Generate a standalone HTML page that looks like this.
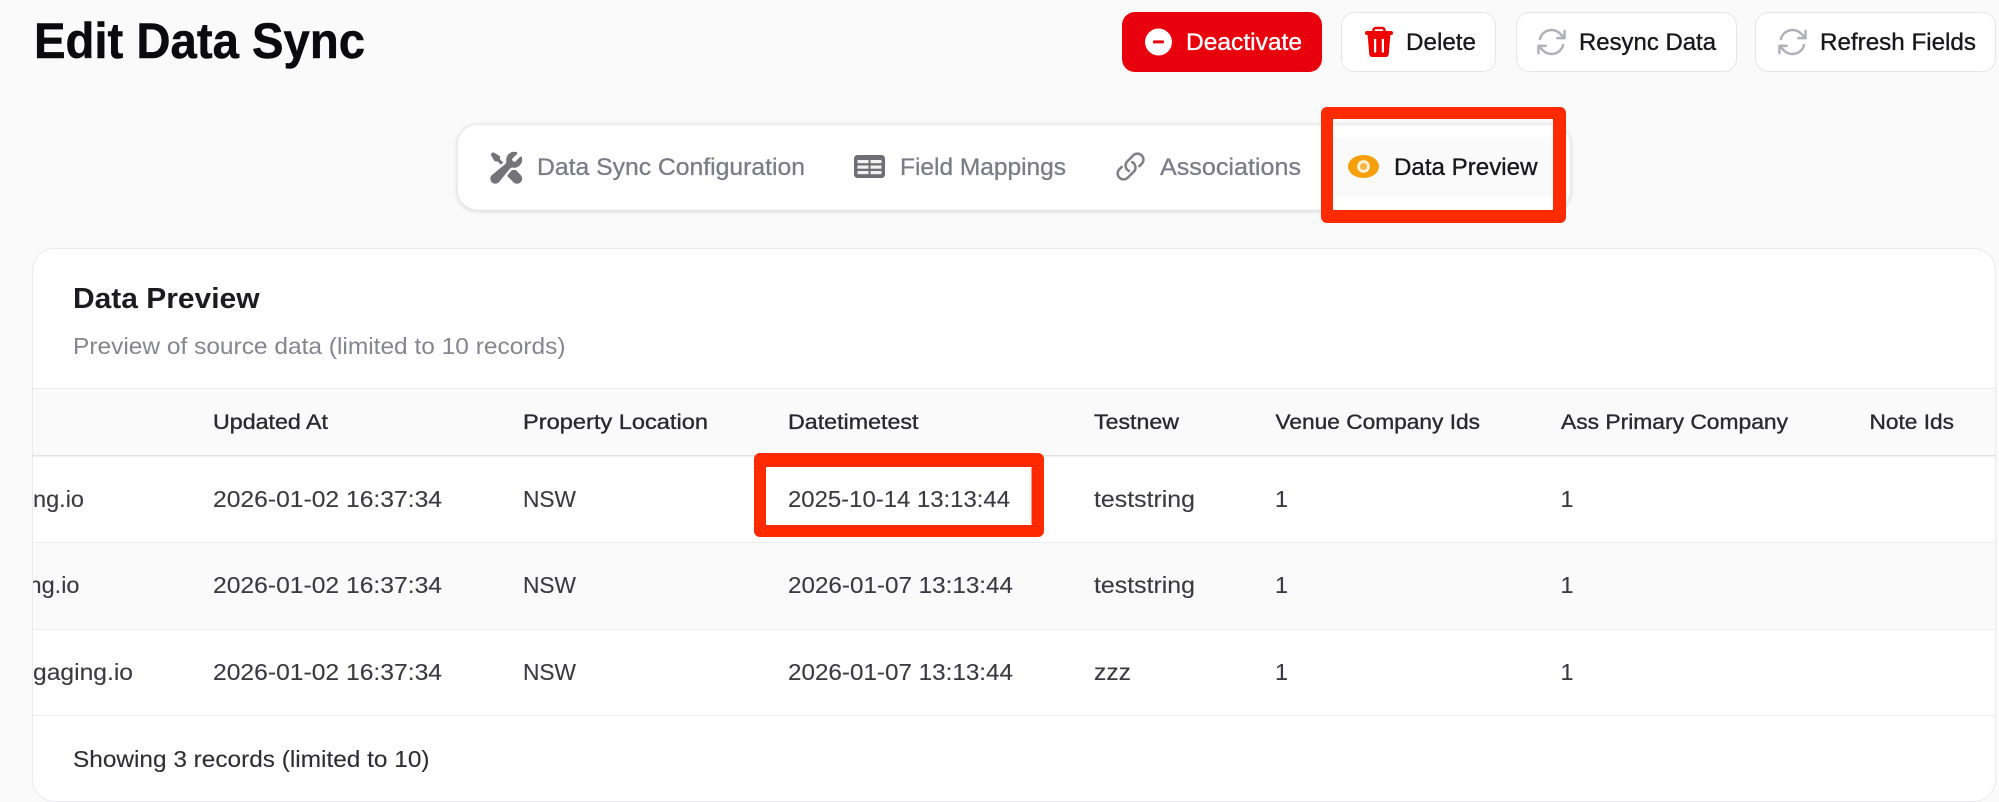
<!DOCTYPE html>
<html lang="en">
<head>
<meta charset="utf-8">
<title>Edit Data Sync</title>
<style>
html,body{margin:0;padding:0;background:#fafafa;width:1999px;height:802px;overflow:hidden}
svg{display:block}
text{font-family:"Liberation Sans",sans-serif;white-space:pre}
.b{font-size:23.5px;fill:#3a3a40;stroke:#3a3a40;stroke-width:.12}
.h{font-size:21px;fill:#2a2a2e;stroke:#2a2a2e;stroke-width:.35}
.t{font-size:24px;fill:#7c7c86;stroke:#7c7c86;stroke-width:.3}
.a{font-size:24px;fill:#18181b;stroke:#18181b;stroke-width:.35}
</style>
</head>
<body>
<svg width="1999" height="802" viewBox="0 0 1999 802" xmlns="http://www.w3.org/2000/svg">
<defs>
<clipPath id="c"><rect x="33" y="380" width="1962" height="340"/></clipPath>
</defs>
<rect width="1999" height="802" fill="#fafafa"/>

<text x="34" y="58" font-size="50" font-weight="700" fill="#0b0b0d" stroke="#0b0b0d" stroke-width=".5" textLength="331" lengthAdjust="spacingAndGlyphs">Edit Data Sync</text>

<!-- Buttons -->
<rect x="1122" y="12" width="200" height="60" rx="13" fill="#e8000d"/>
<circle cx="1158.5" cy="42" r="13.5" fill="#fff"/>
<rect x="1153" y="40.4" width="11" height="3" rx="1" fill="#e8000d"/>
<text x="1186" y="50" class="a" style="fill:#fff;stroke:#fff" textLength="116" lengthAdjust="spacingAndGlyphs">Deactivate</text>

<rect x="1341.5" y="12.5" width="154" height="59" rx="13" fill="#fff" stroke="#e6e6e8"/>
<g fill="#f00000">
<path fill-rule="evenodd" d="M1367.500 34h23l-1.800 20.400a2.800 2.800 0 0 1-2.800 2.600h-13.800a2.800 2.800 0 0 1-2.800-2.600zM1374 39v13.500h2.200V39zM1381.800 39v13.500h2.200V39z"/>
<rect x="1365" y="31" width="28" height="4" rx="2"/>
<path d="M1373.500 31v-.800a2.200 2.200 0 0 1 2.200-2.200h6.600a2.200 2.200 0 0 1 2.200 2.200v.800" fill="none" stroke="#f00000" stroke-width="2.400"/>
</g>
<text x="1406" y="50" class="a" textLength="70" lengthAdjust="spacingAndGlyphs">Delete</text>

<rect x="1516.5" y="12.5" width="220" height="59" rx="13" fill="#fff" stroke="#e6e6e8"/>
<path transform="translate(1534.100 24.600) scale(1.450)" fill="none" stroke="#b0b0b8" stroke-width="1.700" stroke-linecap="round" stroke-linejoin="round" d="M16.023 9.348h4.992v-.001M2.985 19.644v-4.992m0 0h4.992m-4.993 0l3.181 3.183a8.25 8.25 0 0013.803-3.7M4.031 9.865a8.25 8.25 0 0113.803-3.7l3.181 3.182m0-4.991v4.99"/>
<text x="1579" y="50" class="a" textLength="137" lengthAdjust="spacingAndGlyphs">Resync Data</text>

<rect x="1755.5" y="12.5" width="240" height="59" rx="13" fill="#fff" stroke="#e6e6e8"/>
<path transform="translate(1775.100 24.600) scale(1.450)" fill="none" stroke="#b0b0b8" stroke-width="1.700" stroke-linecap="round" stroke-linejoin="round" d="M16.023 9.348h4.992v-.001M2.985 19.644v-4.992m0 0h4.992m-4.993 0l3.181 3.183a8.25 8.25 0 0013.803-3.7M4.031 9.865a8.25 8.25 0 0113.803-3.7l3.181 3.182m0-4.991v4.99"/>
<text x="1820" y="50" class="a" textLength="156" lengthAdjust="spacingAndGlyphs">Refresh Fields</text>

<!-- Tabs -->
<rect x="457.500" y="124.500" width="1113" height="85.500" rx="20" fill="#fff" stroke="#ebebed" style="filter:drop-shadow(0 1px 2px rgba(0,0,0,.14))"/>
<g transform="translate(488 149.500) scale(1.520)" fill="#737378">
<path d="M12 6.750a5.250 5.250 0 016.775-5.025.750.750 0 01.313 1.248l-3.320 3.319c.063.475.276.934.641 1.299.365.365.824.578 1.300.640l3.318-3.319a.750.750 0 011.248.313 5.250 5.250 0 01-5.472 6.756c-1.018-.086-1.870.100-2.309.634L7.344 21.300A3.298 3.298 0 112.700 16.657l8.684-7.151c.533-.440.720-1.291.634-2.309A5.342 5.342 0 0112 6.750z"/>
<path d="M10.076 8.640l-2.201-2.200V4.874a.750.750 0 00-.364-.643l-3.750-2.250a.750.750 0 00-.916.113l-.750.750a.750.750 0 00-.113.916l2.250 3.750a.750.750 0 00.643.364h1.564l2.062 2.062 1.575-1.297z"/>
<path d="M12.556 17.329l4.183 4.182a3.375 3.375 0 004.773-4.773l-3.306-3.305a6.803 6.803 0 01-1.530.043c-.394-.034-.682-.006-.867.042a.589.589 0 00-.167.063l-3.086 3.748z"/>
</g>
<text x="537" y="175" class="t" textLength="268" lengthAdjust="spacingAndGlyphs">Data Sync Configuration</text>

<rect x="854" y="155" width="31" height="23" rx="3.500" fill="#6e6e74"/>
<g fill="#f2f2f3">
<rect x="857.500" y="160" width="11" height="3.200"/><rect x="870.500" y="160" width="11" height="3.200"/>
<rect x="857.500" y="165.500" width="11" height="3.200"/><rect x="870.500" y="165.500" width="11" height="3.200"/>
<rect x="857.500" y="171" width="11" height="3.200"/><rect x="870.500" y="171" width="11" height="3.200"/>
</g>
<text x="900" y="175" class="t" textLength="166" lengthAdjust="spacingAndGlyphs">Field Mappings</text>

<path transform="translate(1114.700 150.700) scale(1.320)" fill="none" stroke="#7f7f86" stroke-width="1.900" stroke-linecap="round" stroke-linejoin="round" d="M13.190 8.688a4.500 4.500 0 011.242 7.244l-4.500 4.500a4.500 4.500 0 01-6.364-6.364l1.757-1.757m13.350-.622l1.757-1.757a4.500 4.500 0 00-6.364-6.364l-4.500 4.500a4.500 4.500 0 001.242 7.244"/>
<text x="1160" y="175" class="t" textLength="141" lengthAdjust="spacingAndGlyphs">Associations</text>

<rect x="1330" y="137" width="230" height="60" rx="10" fill="#fafafa"/>
<ellipse cx="1363.500" cy="166.500" rx="15.500" ry="11.500" fill="#f59f0a"/>
<circle cx="1363.500" cy="166.500" r="5" fill="#f8b64a" stroke="#fff2d8" stroke-width="2.800"/>
<text x="1394" y="175" class="a" textLength="143.500" lengthAdjust="spacingAndGlyphs">Data Preview</text>

<!-- Card -->
<rect x="32.500" y="248.500" width="1963" height="553" rx="22" fill="#fff" stroke="#ebebed"/>
<text x="73" y="308" font-size="29" font-weight="700" fill="#1c1c1f" textLength="186.500" lengthAdjust="spacingAndGlyphs">Data Preview</text>
<text x="73" y="354" font-size="23" fill="#85858f" textLength="492.500" lengthAdjust="spacingAndGlyphs">Preview of source data (limited to 10 records)</text>

<!-- Table -->
<rect x="33" y="389" width="1962" height="66" fill="#fafafa"/>
<rect x="33" y="388" width="1962" height="1" fill="#ececee"/>
<rect x="33" y="455" width="1962" height="1.500" fill="#e2e2e4"/>
<rect x="33" y="542" width="1962" height="87" fill="#fafafa"/>
<rect x="33" y="542" width="1962" height="1" fill="#ececee"/>
<rect x="33" y="629" width="1962" height="1" fill="#ececee"/>
<rect x="33" y="715" width="1962" height="1" fill="#ececee"/>

<text x="213" y="429" class="h" textLength="115" lengthAdjust="spacingAndGlyphs">Updated At</text>
<text x="523" y="429" class="h" textLength="185" lengthAdjust="spacingAndGlyphs">Property Location</text>
<text x="788" y="429" class="h" textLength="130.500" lengthAdjust="spacingAndGlyphs">Datetimetest</text>
<text x="1094" y="429" class="h" textLength="85" lengthAdjust="spacingAndGlyphs">Testnew</text>
<text x="1275.500" y="429" class="h" textLength="204.500" lengthAdjust="spacingAndGlyphs">Venue Company Ids</text>
<text x="1561" y="429" class="h" textLength="227" lengthAdjust="spacingAndGlyphs">Ass Primary Company</text>
<text x="1869.500" y="429" class="h" textLength="84.500" lengthAdjust="spacingAndGlyphs">Note Ids</text>

<g clip-path="url(#c)">
<text x="33" y="507" class="b" textLength="51" lengthAdjust="spacingAndGlyphs">ng.io</text>
<text x="28.500" y="593" class="b" textLength="51" lengthAdjust="spacingAndGlyphs">ng.io</text>
<text x="33" y="680" class="b" textLength="100" lengthAdjust="spacingAndGlyphs">gaging.io</text>
</g>

<text x="213" y="507" class="b" textLength="229" lengthAdjust="spacingAndGlyphs">2026-01-02 16:37:34</text>
<text x="213" y="593" class="b" textLength="229" lengthAdjust="spacingAndGlyphs">2026-01-02 16:37:34</text>
<text x="213" y="680" class="b" textLength="229" lengthAdjust="spacingAndGlyphs">2026-01-02 16:37:34</text>

<text x="523" y="507" class="b" textLength="53" lengthAdjust="spacingAndGlyphs">NSW</text>
<text x="523" y="593" class="b" textLength="53" lengthAdjust="spacingAndGlyphs">NSW</text>
<text x="523" y="680" class="b" textLength="53" lengthAdjust="spacingAndGlyphs">NSW</text>

<text x="788" y="507" class="b" textLength="222" lengthAdjust="spacingAndGlyphs">2025-10-14 13:13:44</text>
<text x="788" y="593" class="b" textLength="225" lengthAdjust="spacingAndGlyphs">2026-01-07 13:13:44</text>
<text x="788" y="680" class="b" textLength="225" lengthAdjust="spacingAndGlyphs">2026-01-07 13:13:44</text>

<text x="1094" y="507" class="b" textLength="101" lengthAdjust="spacingAndGlyphs">teststring</text>
<text x="1094" y="593" class="b" textLength="101" lengthAdjust="spacingAndGlyphs">teststring</text>
<text x="1094" y="680" class="b" textLength="37" lengthAdjust="spacingAndGlyphs">zzz</text>

<text x="1275" y="507" class="b">1</text>
<text x="1275" y="593" class="b">1</text>
<text x="1275" y="680" class="b">1</text>
<text x="1560.500" y="507" class="b">1</text>
<text x="1560.500" y="593" class="b">1</text>
<text x="1560.500" y="680" class="b">1</text>

<text x="73" y="767" class="b" style="fill:#2e2e33;stroke:#2e2e33" textLength="356.500" lengthAdjust="spacingAndGlyphs">Showing 3 records (limited to 10)</text>

<!-- Red annotation frames -->
<path fill="#ff2a00" fill-rule="evenodd" d="M1327 107h233a6 6 0 0 1 6 6v104a6 6 0 0 1-6 6h-233a6 6 0 0 1-6-6v-104a6 6 0 0 1 6-6zM1333 119v91h220v-91z"/>
<path fill="#ff2a00" fill-rule="evenodd" d="M760 453h278a6 6 0 0 1 6 6v72a6 6 0 0 1-6 6h-278a6 6 0 0 1-6-6v-72a6 6 0 0 1 6-6zM766 467v58h265.500v-58z"/>
</svg>
</body>
</html>
